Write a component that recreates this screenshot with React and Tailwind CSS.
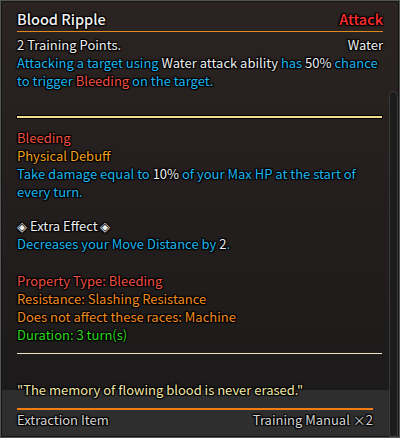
export default function App() {
  const font = { fontFamily: '"Noto Sans CJK SC", "Noto Sans", sans-serif' };
  const shadow = "[text-shadow:0_0_2px_#000,1px_1px_1px_#000,-1px_-1px_1px_#000,1px_-1px_1px_#000,-1px_1px_1px_#000]";
  return (
    <div className="w-[400px] h-[438px] bg-black" style={font}>
      <div className={`relative w-full h-full flex flex-col border border-[#555] shadow-[inset_0_0_0_1px_#141414] bg-[linear-gradient(to_bottom,#2a2321_0,#1c1a1a_389px,#2e2e2e_389px)] text-[13px] leading-[18px] ${shadow}`}>
        {/* Header */}
        <div className="px-4 pt-[8px]">
          <div className="flex justify-between items-end text-[14.5px] leading-[20px] font-medium">
            <span className="text-[#f2f2f2]">Blood Ripple</span>
            <span className="text-[#ff2e2e]">Attack</span>
          </div>
          <div className="mt-[2px] h-[1px] bg-[#e08a1e]" />
          <div className="mt-[4px] flex justify-between text-[#eeeeee]">
            <span>2 Training Points.</span>
            <span>Water</span>
          </div>
          <p className="text-[#1cb6ee]">
            Attacking a target using <span className="text-[#eeeeee]">Water attack ability</span> has{" "}
            <span className="text-[#eeeeee]">50%</span> chance to trigger{" "}
            <span className="text-[#f0503f]">Bleeding</span> on the target.
          </p>
        </div>

        {/* Scroll body */}
        <div className="flex-1 flex min-h-0">
          <div className="flex-1 pl-4 pr-[7px] pt-[26px]">
            <div className="h-[2px] bg-[#f2dc8e] shadow-[0_0_0_1px_#000]" />
            <div className="mt-[11px] text-[#f0503f]">Bleeding</div>
            <div className="text-[#f2a01a]">Physical Debuff</div>
            <p className="text-[#1cb6ee]">
              Take damage equal to <span className="text-[#eeeeee]">10%</span> of your Max HP at the start of every turn.
            </p>
            <div className="h-[16px]" />
            <div className="text-[#eeeeee]">◈ Extra Effect ◈</div>
            <p className="text-[#1cb6ee]">
              Decreases your Move Distance by <span className="text-[#eeeeee]">2</span>.
            </p>
            <div className="h-[19px]" />
            <div className="text-[#ee4f45]">Property Type: Bleeding</div>
            <div className="text-[#f28c1c]">Resistance: Slashing Resistance</div>
            <div className="text-[#f28c1c]">Does not affect these races: Machine</div>
            <div className="text-[#2ed81c]">Duration: 3 turn(s)</div>
            <div className="mt-[9px] h-[1px] bg-[#ece4c4]" />
            <p className="mt-[27px] text-[#f2e8a4]">"The memory of flowing blood is never erased."</p>
          </div>
          <div className="w-[9px] mr-[1px] mt-[1px] rounded-t-[5px] border border-[#3a3a3a] bg-[#1c1c1c]" />
        </div>

        {/* Footer overlay */}
        <div className="absolute left-0 right-[10px] bottom-0 h-[46px] px-4">
          <div className="mt-[17px] h-[2px] bg-[#f07c12]" />
          <div className="mt-[1px] flex justify-between text-[#d4d4d4]">
            <span>Extraction Item</span>
            <span>Training Manual ×2</span>
          </div>
        </div>
      </div>
    </div>
  );
}
